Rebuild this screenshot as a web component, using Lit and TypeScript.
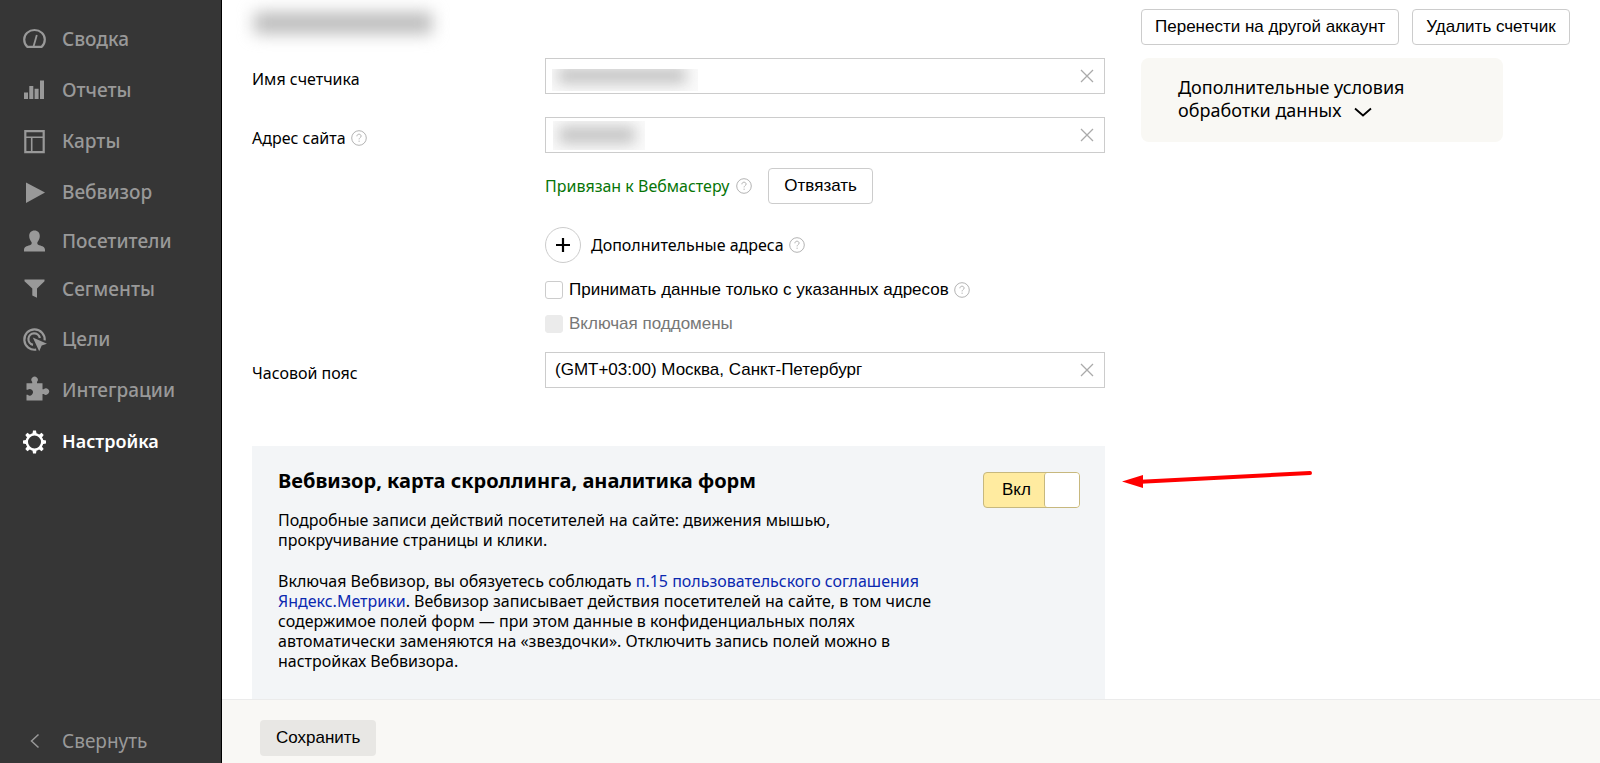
import { LitElement, html, css, svg, TemplateResult } from "lit";
import { customElement, property, state } from "lit/decorators.js";
import { classMap } from "lit/directives/class-map.js";

const gearTeeth = [0, 45, 90, 135, 180, 225, 270, 315];

const icons: Record<string, TemplateResult> = {
  summary: svg`<path d="M5.400 20.900C3.300 19 2.200 16.300 2.200 13.400a10.300 9.400 0 0 1 20.600 0c0 2.900-1.100 5.600-3.200 7.500z" fill="none" stroke="currentColor" stroke-width="2.200" stroke-linejoin="round"/><path d="M14.800 9 11.400 21" fill="none" stroke="currentColor" stroke-width="1.800"/>`,
  reports: svg`<path d="M2 15.500h4V22H2zM7.300 9h4v13h-4zM12.600 11.700h4V22h-4zM18 3.500h4V22h-4z" fill="currentColor"/>`,
  maps: svg`<path d="M3.300 3.200h18.400v21H3.300z" fill="none" stroke="currentColor" stroke-width="2.200"/><path d="M4 9.200h17M9.700 9.200V24" fill="none" stroke="currentColor" stroke-width="1.600"/>`,
  webvisor: svg`<path d="M4 3.500 23 13.500 4 24z" fill="currentColor"/>`,
  visitors: svg`<path d="M12.500 2.500c3.400 0 5.300 2.300 5.300 5.600 0 2.700-1.300 4.700-2.400 6.200-.4 1.600.3 2.500 1.800 2.900 3.400.9 5.600 1.700 5.800 4.600v1.700H2v-1.700c.2-2.900 2.400-3.700 5.800-4.600 1.500-.4 2.200-1.300 1.800-2.900-1.100-1.500-2.400-3.500-2.400-6.200 0-3.300 1.900-5.600 5.300-5.600z" fill="currentColor"/>`,
  segments: svg`<path d="M2.500 3.500h20v1.800L15 12.500v9.300l-4.700-2.300v-7L2.500 5.300z" fill="currentColor"/>`,
  goals: svg`<path d="M14.200 23.600A10.200 10.200 0 1 1 22.700 14.400M11 18.800A5.800 5.800 0 1 1 17.900 12" fill="none" stroke="currentColor" stroke-width="2.200"/><path d="M10.800 11.600 25 17.800l-5.300 1.600-2.500 5.800z" fill="currentColor"/>`,
  integrations: svg`<path d="M4.500 6.200h5.700V5A3.200 3.200 0 1 1 15 5v1.200h5.500v6h1.200a3.200 3.200 0 1 1 0 4.700h-1.200V23.500h-16v-5.700h1.200a3.200 3.200 0 1 0 0-5H4.500z" fill="currentColor"/>`,
  settings: svg`<circle cx="12.500" cy="14" r="7.700" fill="none" stroke="currentColor" stroke-width="2.400"/>${gearTeeth.map(
    (a) => svg`<path d="M10.300 6.500 11 2.500h3l.7 4z" transform="rotate(${a} 12.500 14)" fill="currentColor"/>`
  )}`,
  collapse: svg`<path d="M16.500 6.500 9.500 13l7 6.500" fill="none" stroke="currentColor" stroke-width="1.500"/>`,
};

@customElement("help-hint")
class HelpHint extends LitElement {
  static styles = css`
    :host { display: inline-flex; }
    .hint { display: flex; padding: 0; border: 0; background: none; color: #b3b3b3; cursor: pointer; }
  `;
  render() {
    return html`<button class="hint" type="button" aria-label="Справка">
      <svg width="16" height="16" viewBox="0 0 16 16" fill="none" stroke="currentColor">
        <circle cx="8" cy="8" r="7.300" />
        <path d="M5.900 6.300c0-1.300.9-2.100 2.100-2.100s2.100.8 2.100 1.900c0 1.500-2 1.600-2 3.300M8.100 10.600v1.300" />
      </svg>
    </button>`;
  }
}

@customElement("clearable-field")
class ClearableField extends LitElement {
  @property() label = "";
  @property() value = "";
  @property() mask = "";
  static styles = css`
    :host { display: grid; grid-template-columns: 293px minmax(0, 1fr); }
    .label { display: flex; gap: 5px; align-items: center; align-self: start; padding-top: 10px; font: 16px/22px "Noto Sans", sans-serif; }
    .box { position: relative; display: flex; align-items: center; height: 34px; border: 1px solid #ccc; background: #fff; }
    .input { flex: 1; min-width: 0; height: 34px; padding: 0 9px; border: 0; outline: 0; background: none; color: #000; font: 17px "Liberation Sans", sans-serif; }
    .clear { display: flex; padding: 0 9px; border: 0; background: none; color: #aaa; cursor: pointer; }
    .mask { position: absolute; overflow: hidden; pointer-events: none; }
    .mask::before { content: ""; position: absolute; background: #c6c6c6; filter: blur(7px); }
    .name { left: 6px; top: 10px; width: 146px; height: 22px; background: #fafafa; }
    .name::before { left: 6px; right: 12px; top: -2px; height: 17px; }
    .site { left: 7px; top: 3px; width: 92px; height: 29px; background: #fafafa; }
    .site::before { left: 6px; right: 10px; top: 5px; height: 18px; }
  `;
  render() {
    return html`
      <div class="label"><label for="field">${this.label}</label><slot></slot></div>
      <div class="box">
        <input class="input" id="field" type="text" .value=${this.value} />
        ${this.mask ? html`<span class="mask ${this.mask}"></span>` : ""}
        <button class="clear" type="button" aria-label="Очистить">
          <svg width="16" height="16" viewBox="0 0 16 16" fill="none" stroke="currentColor" stroke-width="1.300"><path d="M2 2l12 12M14 2 2 14" /></svg>
        </button>
      </div>`;
  }
}

@customElement("side-nav")
class SideNav extends LitElement {
  static styles = css`
    :host { display: flex; flex-direction: column; justify-content: space-between; box-sizing: border-box; width: 222px; flex: none; padding: 13px 0 0; border-right: 1px solid #000; background: #363636; }
    .item { display: flex; align-items: center; gap: 14px; height: 51px; padding-left: 22px; color: #999; font: 500 19px/26px "Noto Sans", sans-serif; text-decoration: none; }
    .tight { height: 48px; }
    .active { color: #fff; font-size: 18px; font-weight: 600; }
    .collapse { width: 100%; height: 45px; border: 0; background: none; text-align: left; font-weight: 400; cursor: pointer; }
    .icon { flex: none; overflow: visible; }
  `;
  private items = [
    ["summary", "Сводка"],
    ["reports", "Отчеты"],
    ["maps", "Карты"],
    ["webvisor", "Вебвизор"],
    ["visitors", "Посетители"],
    ["segments", "Сегменты"],
    ["goals", "Цели"],
    ["integrations", "Интеграции"],
    ["settings", "Настройка"],
  ];
  private icon(name: string) {
    return html`<svg class="icon" width="26" height="26" viewBox="0 0 26 26" aria-hidden="true">${icons[name]}</svg>`;
  }
  render() {
    return html`
      <nav>
        ${this.items.map(
          ([id, text]) => html`<a
            href="#${id}"
            class=${classMap({ item: true, tight: id === "visitors" || id === "segments", active: id === "settings" })}
            >${this.icon(id)}<span>${text}</span></a
          >`
        )}
      </nav>
      <button class="item collapse" type="button">${this.icon("collapse")}<span>Свернуть</span></button>`;
  }
}

@customElement("app-root")
class AppRoot extends LitElement {
  @state() private recording = true;

  static styles = css`
    :host { display: flex; height: 100vh; overflow: hidden; background: #fff; color: #000; font: 16px/20px "Noto Sans", sans-serif; }
    .main { display: flex; flex: 1; flex-direction: column; min-width: 0; }
    .content { display: flex; flex: 1; gap: 36px; min-height: 0; overflow: hidden; padding: 9px 24px 0 30px; }
    .form { flex: 0 1 853px; min-width: 0; }
    .title { position: relative; height: 49px; margin: 0; }
    .title::before { content: ""; position: absolute; left: 2px; top: 3px; width: 178px; height: 22px; background: #bdbdbd; filter: blur(8px); }
    .address { margin-top: 23px; }
    .details { display: flex; flex-direction: column; align-items: flex-start; padding-left: 293px; }
    .row { display: flex; align-items: center; }
    .linked { margin-top: 15px; }
    .green { margin-right: 7px; color: #077507; }
    .btn { height: 36px; padding: 0 13px; border: 1px solid #ccc; border-radius: 4px; background: #fff; color: #000; font: 17px "Liberation Sans", sans-serif; white-space: nowrap; cursor: pointer; }
    .unlink { margin-left: 16px; padding: 0 15px; }
    .extra { margin-top: 23px; gap: 5px; }
    .add { display: flex; align-items: center; justify-content: center; width: 36px; height: 36px; margin-right: 5px; padding: 0; border: 1px solid #ccc; border-radius: 50%; background: #fff; color: #000; cursor: pointer; }
    .check { gap: 5px; font: 17px/20px "Liberation Sans", sans-serif; }
    .check label { display: flex; gap: 6px; align-items: center; }
    .check input { appearance: none; flex: none; box-sizing: border-box; width: 18px; height: 18px; margin: 0; border: 1px solid #ccc; border-radius: 3px; background: #fff; }
    .check input:checked { background: #ffeba0; }
    .check input:disabled { border-color: #ebebeb; background: #ebebeb; }
    .only { margin-top: 17px; }
    .sub { margin-top: 14px; color: #777; }
    .zone { margin-top: 18px; }
    .notice { position: relative; display: flex; justify-content: space-between; align-items: flex-start; margin-top: 58px; padding: 22px 25px 30px 26px; background: #f3f5f7; }
    .text { max-width: 665px; }
    .heading { margin: 0; font: 700 20px/26px "Noto Sans", sans-serif; }
    .para { margin: 16px 0 0; }
    .terms { margin-top: 21px; }
    .link { color: #0b29b0; text-decoration: none; }
    .toggle { display: flex; flex: none; align-items: stretch; justify-content: space-between; width: 97px; height: 36px; margin-top: 4px; padding: 0; border: 1px solid #c7b87e; border-radius: 4px; background: #ffeba0; color: #000; font: 17px "Liberation Sans", sans-serif; cursor: pointer; }
    .state { align-self: center; padding-left: 18px; }
    .knob { width: 34px; border-left: 1px solid #c7b87e; border-radius: 3px; background: #fff; }
    .arrow { position: absolute; left: 100%; top: 18px; margin-left: 16px; pointer-events: none; }
    .aside { flex: none; }
    .actions { display: flex; gap: 13px; }
    .policy { display: block; width: 362px; margin-top: 13px; padding: 18px 37px 20px; border: 0; border-radius: 8px; background: #f9f8f4; color: #000; font: 18px/23px "Noto Sans", sans-serif; text-align: left; cursor: pointer; }
    .chevron { margin-left: 8px; vertical-align: -4px; }
    .footer { box-sizing: border-box; flex: none; height: 64px; padding: 20px 38px 0; border-top: 1px solid #ebebeb; background: #f9f8f5; }
    .save { padding: 0 16px; border: 0; background: #e8e7e4; }
  `;

  render() {
    return html`
      <side-nav></side-nav>
      <div class="main">
        <div class="content">
          <main class="form">
            <div class="title"></div>
            <clearable-field label="Имя счетчика" mask="name"></clearable-field>
            <clearable-field class="address" label="Адрес сайта" mask="site"><help-hint></help-hint></clearable-field>
            <div class="details">
              <div class="row linked">
                <span class="green">Привязан к Вебмастеру</span><help-hint></help-hint>
                <button class="btn unlink" type="button">Отвязать</button>
              </div>
              <div class="row extra">
                <button class="add" type="button" aria-labelledby="extra">
                  <svg width="16" height="16" viewBox="0 0 16 16" stroke="currentColor" stroke-width="2.200"><path d="M8 1v14M1 8h14" /></svg>
                </button>
                <span id="extra">Дополнительные адреса</span><help-hint></help-hint>
              </div>
              <div class="row check only">
                <label><input type="checkbox" />Принимать данные только с указанных адресов</label><help-hint></help-hint>
              </div>
              <div class="row check sub">
                <label><input type="checkbox" disabled />Включая поддомены</label>
              </div>
            </div>
            <clearable-field class="zone" label="Часовой пояс" value="(GMT+03:00) Москва, Санкт-Петербург"></clearable-field>
            <section class="notice">
              <div class="text">
                <h2 class="heading">Вебвизор, карта скроллинга, аналитика форм</h2>
                <p class="para">Подробные записи действий посетителей на сайте: движения мышью,<br />прокручивание страницы и клики.</p>
                <p class="para terms">
                  Включая Вебвизор, вы обязуетесь соблюдать
                  <a class="link" href="#terms">п.15 пользовательского соглашения<br />Яндекс.Метрики</a>. Вебвизор записывает действия посетителей на сайте, в том числе<br />содержимое полей форм — при этом данные в конфиденциальных полях<br />автоматически заменяются на «звездочки». Отключить запись полей можно в<br />настройках Вебвизора.
                </p>
              </div>
              <button class="toggle" type="button" role="switch" aria-checked=${this.recording} @click=${() => (this.recording = !this.recording)}>
                <span class="state">${this.recording ? "Вкл" : "Выкл"}</span><span class="knob"></span>
              </button>
              <svg class="arrow" width="192" height="28" viewBox="0 0 192 28" aria-hidden="true">
                <path d="M20 17.800 189 9" stroke="#f00" stroke-width="4" stroke-linecap="round" />
                <path d="M1 17.500 22 11v13z" fill="#f00" />
              </svg>
            </section>
          </main>
          <aside class="aside">
            <div class="actions">
              <button class="btn" type="button">Перенести на другой аккаунт</button>
              <button class="btn" type="button">Удалить счетчик</button>
            </div>
            <button class="policy" type="button">
              Дополнительные условия<br />обработки данных
              <svg class="chevron" width="18" height="18" viewBox="0 0 18 18" fill="none" stroke="currentColor" stroke-width="1.800"><path d="M1 5.500 9 12.500l8-7" /></svg>
            </button>
          </aside>
        </div>
        <footer class="footer"><button class="btn save" type="button">Сохранить</button></footer>
      </div>`;
  }
}
